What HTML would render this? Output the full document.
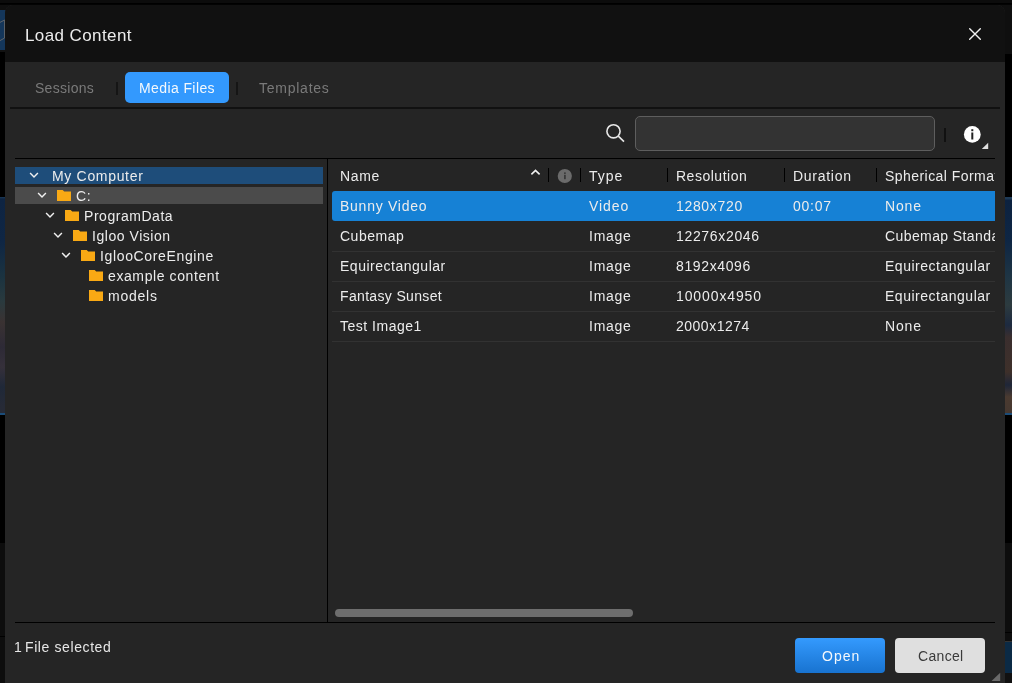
<!DOCTYPE html>
<html><head><meta charset="utf-8">
<style>
*{box-sizing:border-box;margin:0;padding:0}
html,body{width:1012px;height:683px;overflow:hidden;background:#000;font-family:"Liberation Sans",sans-serif;color:#e8e8e8}
.a{position:absolute}
.t{position:absolute;white-space:nowrap;will-change:transform}
</style></head><body>
<div class="a" style="left:0;top:0;width:1012px;height:3px;background:#0c0c0c"></div>
<div class="a" style="left:0;top:4px;width:1012px;height:1px;background:#030303"></div>
<div class="a" style="left:0;top:5px;width:1012px;height:49px;background:#0f0f0f"></div>
<div class="a" style="left:0;top:10px;width:6px;height:40px;background:#14365a"></div><div class="a" style="left:0;top:50px;width:6px;height:2px;background:#121212"></div><div class="a" style="left:0;top:52px;width:6px;height:2px;background:#000"></div>
<svg class="a" style="left:0;top:10px" width="6" height="40" viewBox="0 0 6 40"><path d="M0 30.6L4.6 28V10L0 12.4" fill="none" stroke="#6a6a6a" stroke-width="0.9"/></svg>
<div class="a" style="left:0;top:197px;width:6px;height:216px;background:linear-gradient(#1c3a58 0px,#0e2442 2px,#0f2644 45px,#1b3340 80px,#2a3a3e 105px,#3a3232 125px,#2d2a36 150px,#35303a 170px,#1f2838 190px,#262a36 210px,#262a36 216px)"></div>
<div class="a" style="left:1005px;top:197px;width:7px;height:216px;background:linear-gradient(#1e3a56 0px,#1e3a56 2px,#0c2240 3px,#0e2644 45px,#1f3544 80px,#2d3b3f 108px,#1d2a40 128px,#3a2e2e 140px,#3e302a 175px,#1e2638 188px,#4a3a30 200px,#463830 216px)"></div>
<div class="a" style="left:0;top:413px;width:1012px;height:2px;background:#1b4c78"></div>
<div class="a" style="left:0;top:543px;width:1012px;height:140px;background:#0d0d0d"></div>
<div class="a" style="left:0;top:636px;width:6px;height:1px;background:#000"></div>
<div class="a" style="left:1005px;top:632px;width:7px;height:1px;background:#000"></div>
<div class="a" style="left:1005px;top:641px;width:7px;height:1px;background:#333"></div>
<div class="a" style="left:1005px;top:642px;width:7px;height:31px;background:#0b2a45"></div><div class="a" style="left:1005px;top:673px;width:7px;height:10px;background:#111"></div>
<div class="a" style="left:5px;top:5px;width:1000px;height:700px;background:#252525;border-radius:8px 8px 0 0;overflow:hidden"><div class="a" style="left:0;top:0;width:1000px;height:57px;background:#111"></div></div>
<div class="t" style="left:24.5px;top:26.11px;font-size:17px;line-height:20px;color:#ececec;letter-spacing:0.4px;">Load Content</div>
<svg class="a" style="left:967px;top:26px" width="16" height="16" viewBox="0 0 16 16"><path d="M2.7 2.7L13.3 13.3M13.3 2.7L2.7 13.3" stroke="#f2f2f2" stroke-width="1.4" stroke-linecap="round"/></svg>
<div class="t" style="left:35px;top:80.25px;font-size:14px;line-height:16px;color:#7a7a7a;letter-spacing:0.286px;">Sessions</div>
<div class="a" style="left:116px;top:82px;width:2px;height:13px;background:#151515"></div>
<div class="a" style="left:125px;top:72px;width:104px;height:30.5px;background:#3399fe;border-radius:5px"></div>
<div class="t" style="left:138.6px;top:80.25px;font-size:14px;line-height:16px;color:#f4f8fc;letter-spacing:0.4px;">Media Files</div>
<div class="a" style="left:236px;top:82px;width:2px;height:13px;background:#151515"></div>
<div class="t" style="left:259px;top:80.25px;font-size:14px;line-height:16px;color:#7a7a7a;letter-spacing:0.75px;">Templates</div>
<div class="a" style="left:10px;top:106.5px;width:990px;height:2px;background:#111"></div>
<svg class="a" style="left:603px;top:122px" width="26" height="26" viewBox="0 0 26 26"><circle cx="10.5" cy="9.3" r="6.6" fill="none" stroke="#e8e8e8" stroke-width="1.6"/><path d="M15.3 14.1L21 19.6" stroke="#e8e8e8" stroke-width="1.6"/></svg>
<div class="a" style="left:635px;top:116px;width:300px;height:35px;background:#333;border:1.5px solid #5e5e5e;border-radius:5px"></div>
<div class="a" style="left:944px;top:128px;width:2px;height:14px;background:#111"></div>
<svg class="a" style="left:960px;top:122px" width="30" height="30" viewBox="0 0 30 30"><circle cx="12.3" cy="12.4" r="8.4" fill="#fff"/><rect x="11.3" y="10.5" width="2" height="7" fill="#222"/><rect x="11.3" y="7.2" width="2" height="2" fill="#222"/><path d="M21.8 26.9L28.2 20.8V26.9Z" fill="#e0e0e0"/></svg>
<div class="a" style="left:15px;top:158px;width:980px;height:1px;background:#000"></div>
<div class="a" style="left:15px;top:167px;width:308px;height:17px;background:#1e4d7a"></div>
<div class="a" style="left:15px;top:187px;width:308px;height:17px;background:#4b4b4b"></div>
<svg class="a" style="left:27.6px;top:170.4px" width="12" height="10" viewBox="0 0 12 10"><path d="M2.1 3.1L6 6.9L9.9 3.1" fill="none" stroke="#f0f0f0" stroke-width="1.45"/></svg>
<div class="t" style="left:51.9px;top:168.25px;font-size:14px;line-height:16px;color:#ececec;letter-spacing:0.68px;">My Computer</div>
<svg class="a" style="left:35.6px;top:190.4px" width="12" height="10" viewBox="0 0 12 10"><path d="M2.1 3.1L6 6.9L9.9 3.1" fill="none" stroke="#f0f0f0" stroke-width="1.45"/></svg>
<svg class="a" style="left:57px;top:190px" width="14" height="11" viewBox="0 0 14 11"><path d="M0 0H5.7L7.2 1.5H14V11H0Z" fill="#f9a914"/></svg>
<div class="t" style="left:75.9px;top:188.25px;font-size:14px;line-height:16px;color:#ececec;letter-spacing:0.55px;">C:</div>
<svg class="a" style="left:43.6px;top:210.4px" width="12" height="10" viewBox="0 0 12 10"><path d="M2.1 3.1L6 6.9L9.9 3.1" fill="none" stroke="#f0f0f0" stroke-width="1.45"/></svg>
<svg class="a" style="left:65px;top:210px" width="14" height="11" viewBox="0 0 14 11"><path d="M0 0H5.7L7.2 1.5H14V11H0Z" fill="#f9a914"/></svg>
<div class="t" style="left:83.9px;top:208.25px;font-size:14px;line-height:16px;color:#ececec;letter-spacing:0.54px;">ProgramData</div>
<svg class="a" style="left:51.6px;top:230.4px" width="12" height="10" viewBox="0 0 12 10"><path d="M2.1 3.1L6 6.9L9.9 3.1" fill="none" stroke="#f0f0f0" stroke-width="1.45"/></svg>
<svg class="a" style="left:73px;top:230px" width="14" height="11" viewBox="0 0 14 11"><path d="M0 0H5.7L7.2 1.5H14V11H0Z" fill="#f9a914"/></svg>
<div class="t" style="left:91.9px;top:228.25px;font-size:14px;line-height:16px;color:#ececec;letter-spacing:0.545px;">Igloo Vision</div>
<svg class="a" style="left:59.599999999999994px;top:250.4px" width="12" height="10" viewBox="0 0 12 10"><path d="M2.1 3.1L6 6.9L9.9 3.1" fill="none" stroke="#f0f0f0" stroke-width="1.45"/></svg>
<svg class="a" style="left:81px;top:250px" width="14" height="11" viewBox="0 0 14 11"><path d="M0 0H5.7L7.2 1.5H14V11H0Z" fill="#f9a914"/></svg>
<div class="t" style="left:99.9px;top:248.25px;font-size:14px;line-height:16px;color:#ececec;letter-spacing:0.643px;">IglooCoreEngine</div>
<svg class="a" style="left:89px;top:270px" width="14" height="11" viewBox="0 0 14 11"><path d="M0 0H5.7L7.2 1.5H14V11H0Z" fill="#f9a914"/></svg>
<div class="t" style="left:107.9px;top:268.25px;font-size:14px;line-height:16px;color:#ececec;letter-spacing:0.6px;">example content</div>
<svg class="a" style="left:89px;top:290px" width="14" height="11" viewBox="0 0 14 11"><path d="M0 0H5.7L7.2 1.5H14V11H0Z" fill="#f9a914"/></svg>
<div class="t" style="left:107.9px;top:288.25px;font-size:14px;line-height:16px;color:#ececec;letter-spacing:0.76px;">models</div>
<div class="a" style="left:327px;top:158px;width:1px;height:464px;background:#000"></div>
<div class="t" style="left:340.3px;top:167.95px;font-size:14px;line-height:16px;color:#ececec;letter-spacing:0.65px;">Name</div>
<svg class="a" style="left:529px;top:166.4px" width="13" height="12" viewBox="0 0 13 12"><path d="M2.4 8.4L6.5 4.4L10.6 8.4" fill="none" stroke="#f0f0f0" stroke-width="1.6"/></svg>
<div class="a" style="left:548px;top:168px;width:1px;height:14px;background:#000"></div>
<div class="a" style="left:580px;top:168px;width:1px;height:14px;background:#000"></div>
<div class="a" style="left:667px;top:168px;width:1px;height:14px;background:#000"></div>
<div class="a" style="left:784px;top:168px;width:1px;height:14px;background:#000"></div>
<div class="a" style="left:876px;top:168px;width:1px;height:14px;background:#000"></div>
<svg class="a" style="left:557px;top:167.5px" width="16" height="16" viewBox="0 0 16 16"><circle cx="7.8" cy="8" r="7.1" fill="#6b6b6b"/><rect x="7" y="6.8" width="1.8" height="4.4" fill="#3a3a3a"/><rect x="7" y="4.4" width="1.8" height="1.5" fill="#3a3a3a"/></svg>
<div class="t" style="left:589.3px;top:167.95px;font-size:14px;line-height:16px;color:#ececec;letter-spacing:1.0px;">Type</div>
<div class="t" style="left:676.3px;top:167.95px;font-size:14px;line-height:16px;color:#ececec;letter-spacing:0.511px;">Resolution</div>
<div class="t" style="left:793.2px;top:167.95px;font-size:14px;line-height:16px;color:#ececec;letter-spacing:0.714px;">Duration</div>
<div class="a" style="left:880px;top:160px;width:115px;height:30px;overflow:hidden"><div class="t" style="left:5.4px;top:7.95px;font-size:14px;line-height:16px;color:#ececec;letter-spacing:0.45px;">Spherical Format</div>
</div>
<div class="a" style="left:332px;top:191px;width:663px;height:30px;background:#1681d5;border-radius:3px 0 0 3px"></div>
<div class="a" style="left:332px;top:251px;width:663px;height:1px;background:#323232"></div>
<div class="a" style="left:332px;top:281px;width:663px;height:1px;background:#323232"></div>
<div class="a" style="left:332px;top:311px;width:663px;height:1px;background:#323232"></div>
<div class="a" style="left:332px;top:341px;width:663px;height:1px;background:#323232"></div>
<div class="t" style="left:340.3px;top:197.85px;font-size:14px;line-height:16px;color:#ececec;letter-spacing:0.74px;">Bunny Video</div>
<div class="t" style="left:589.3px;top:197.85px;font-size:14px;line-height:16px;color:#ececec;letter-spacing:0.925px;">Video</div>
<div class="t" style="left:676.3px;top:197.85px;font-size:14px;line-height:16px;color:#ececec;letter-spacing:0.671px;">1280x720</div>
<div class="t" style="left:793.2px;top:197.85px;font-size:14px;line-height:16px;color:#ececec;letter-spacing:0.75px;">00:07</div>
<div class="a" style="left:880px;top:190.7px;width:115px;height:30px;overflow:hidden"><div class="t" style="left:5.4px;top:7.15px;font-size:14px;line-height:16px;color:#ececec;letter-spacing:0.85px;">None</div>
</div>
<div class="t" style="left:340.3px;top:227.85px;font-size:14px;line-height:16px;color:#ececec;letter-spacing:0.5px;">Cubemap</div>
<div class="t" style="left:589.3px;top:227.85px;font-size:14px;line-height:16px;color:#ececec;letter-spacing:0.75px;">Image</div>
<div class="t" style="left:676.3px;top:227.85px;font-size:14px;line-height:16px;color:#ececec;letter-spacing:0.667px;">12276x2046</div>
<div class="a" style="left:880px;top:220.7px;width:115px;height:30px;overflow:hidden"><div class="t" style="left:5.4px;top:7.15px;font-size:14px;line-height:16px;color:#ececec;letter-spacing:0.4px;">Cubemap Standard</div>
</div>
<div class="t" style="left:340.3px;top:257.85px;font-size:14px;line-height:16px;color:#ececec;letter-spacing:0.514px;">Equirectangular</div>
<div class="t" style="left:589.3px;top:257.85px;font-size:14px;line-height:16px;color:#ececec;letter-spacing:0.75px;">Image</div>
<div class="t" style="left:676.3px;top:257.85px;font-size:14px;line-height:16px;color:#ececec;letter-spacing:0.625px;">8192x4096</div>
<div class="a" style="left:880px;top:250.7px;width:115px;height:30px;overflow:hidden"><div class="t" style="left:5.4px;top:7.15px;font-size:14px;line-height:16px;color:#ececec;letter-spacing:0.514px;">Equirectangular</div>
</div>
<div class="t" style="left:340.3px;top:287.85px;font-size:14px;line-height:16px;color:#ececec;letter-spacing:0.338px;">Fantasy Sunset</div>
<div class="t" style="left:589.3px;top:287.85px;font-size:14px;line-height:16px;color:#ececec;letter-spacing:0.75px;">Image</div>
<div class="t" style="left:676.3px;top:287.85px;font-size:14px;line-height:16px;color:#ececec;letter-spacing:0.889px;">10000x4950</div>
<div class="a" style="left:880px;top:280.7px;width:115px;height:30px;overflow:hidden"><div class="t" style="left:5.4px;top:7.15px;font-size:14px;line-height:16px;color:#ececec;letter-spacing:0.514px;">Equirectangular</div>
</div>
<div class="t" style="left:340.3px;top:317.85px;font-size:14px;line-height:16px;color:#ececec;letter-spacing:0.51px;">Test Image1</div>
<div class="t" style="left:589.3px;top:317.85px;font-size:14px;line-height:16px;color:#ececec;letter-spacing:0.75px;">Image</div>
<div class="t" style="left:676.3px;top:317.85px;font-size:14px;line-height:16px;color:#ececec;letter-spacing:0.5px;">2000x1274</div>
<div class="a" style="left:880px;top:310.7px;width:115px;height:30px;overflow:hidden"><div class="t" style="left:5.4px;top:7.15px;font-size:14px;line-height:16px;color:#ececec;letter-spacing:0.85px;">None</div>
</div>
<div class="a" style="left:335px;top:609px;width:298px;height:8px;background:#6e6e6e;border-radius:4px"></div>
<div class="a" style="left:15px;top:622px;width:980px;height:1px;background:#000"></div>
<div class="t" style="left:14.2px;top:639.15px;font-size:14px;line-height:16px;color:#e6e6e6;letter-spacing:0px;">1</div>
<div class="t" style="left:24.8px;top:639.15px;font-size:14px;line-height:16px;color:#e6e6e6;letter-spacing:0.6px;">File selected</div>
<div class="a" style="left:795px;top:638px;width:90px;height:35px;background:linear-gradient(#349afe,#1873d0);border-radius:4px"></div>
<div class="t" style="left:821.5px;top:647.95px;font-size:14px;line-height:16px;color:#f4f8fc;letter-spacing:1.0px;">Open</div>
<div class="a" style="left:895px;top:638px;width:90px;height:35px;background:#dfdfdf;border-radius:4px"></div>
<div class="t" style="left:917.8px;top:647.95px;font-size:14px;line-height:16px;color:#3b3b3b;letter-spacing:0.32px;">Cancel</div>
<svg class="a" style="left:991px;top:672px" width="10" height="10" viewBox="0 0 10 10"><path d="M0.5 9H9.2V0.8Z" fill="#6a6a6a"/></svg>
</body></html>
